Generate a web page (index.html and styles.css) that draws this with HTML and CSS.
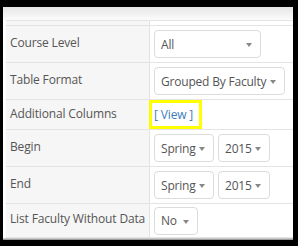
FILE: index.html
```html
<!DOCTYPE html>
<html lang="en">
<head>
  <meta charset="UTF-8">
  <title>Report Options</title>
  <link rel="stylesheet" href="styles.css">
</head>
<body>
  <div class="frame">
    <div class="top-shade"></div>
    <div class="options">
      <div class="row row-head">
        <div class="label"></div>
        <div class="value"></div>
      </div>
      <div class="row">
        <div class="label">Course Level</div>
        <div class="value">
          <span class="select w-all">All<i class="caret"></i></span>
        </div>
      </div>
      <div class="row">
        <div class="label">Table Format</div>
        <div class="value">
          <span class="select w-format">Grouped By Faculty<i class="caret"></i></span>
        </div>
      </div>
      <div class="row row-short">
        <div class="label">Additional Columns</div>
        <div class="value">
          <a href="#" class="view-link">[ View ]</a>
        </div>
      </div>
      <div class="row">
        <div class="label">Begin</div>
        <div class="value">
          <span class="select w-term">Spring<i class="caret"></i></span>
          <span class="select w-year">2015<i class="caret"></i></span>
        </div>
      </div>
      <div class="row">
        <div class="label">End</div>
        <div class="value">
          <span class="select w-term">Spring<i class="caret"></i></span>
          <span class="select w-year">2015<i class="caret"></i></span>
        </div>
      </div>
      <div class="row row-last">
        <div class="label">List Faculty Without Data</div>
        <div class="value">
          <span class="select w-no">No<i class="caret"></i></span>
        </div>
      </div>
    </div>
    <div class="bottom-shade"></div>
  </div>
</body>
</html>
```

FILE: styles.css
```css
* {
  margin: 0;
  padding: 0;
  box-sizing: border-box;
}
body {
  background: #000;
  font-family: 'Open Sans', sans-serif;
  font-size: 12px;
  letter-spacing: -0.15px;
  color: #555;
  width: 298px;
  height: 246px;
  overflow: hidden;
}
.frame {
  margin: 7px 5px 0 3px;
  height: 233px;
  background: #fff;
  padding-left: 3px;
  display: flex;
  flex-direction: column;
}
.top-shade {
  height: 13px;
  margin-left: -3px;
  background: linear-gradient(#e6e6e6, #fbfbfb);
}
.options {
  flex: 1;
}
.row {
  display: flex;
  height: 37px;
  border-top: 1px solid #e4e4e4;
}
.row-head {
  height: 5px;
}
.row-short {
  height: 30px;
}
.row-last {
  height: 35px;
  border-bottom: 1px solid #e4e4e4;
}
.label {
  width: 144px;
  flex-shrink: 0;
  background: #f6f6f6;
  border-right: 1px solid #e4e4e4;
  padding: 0 0 4px 4px;
  display: flex;
  align-items: center;
  white-space: nowrap;
}
.row-short .label {
  padding-bottom: 2px;
}
.row-head .label {
  padding: 0;
}
.value {
  flex: 1;
  display: flex;
  align-items: center;
  gap: 4px;
  padding-left: 4px;
}
.select {
  position: relative;
  display: inline-flex;
  align-items: center;
  height: 28px;
  padding: 0 6px;
  border: 1px solid #dcdcdc;
  border-radius: 4px;
  background: #fff;
  color: #555;
  font-size: 12px;
  letter-spacing: -0.2px;
  white-space: nowrap;
}
.caret {
  position: absolute;
  right: 8px;
  top: 12px;
  width: 0;
  height: 0;
  border-left: 3.5px solid transparent;
  border-right: 3.5px solid transparent;
  border-top: 4px solid #888;
}
.w-all { width: 107px; }
.w-format { width: 131px; }
.w-term { width: 60px; }
.w-year { width: 52px; }
.w-no { width: 44px; }
.view-link {
  margin-left: -5px;
  margin-top: -1px;
  width: 53px;
  height: 29px;
  border: 3px solid #ffff00;
  padding-left: 2px;
  display: flex;
  align-items: center;
  color: #3c7dbd;
  text-decoration: none;
  font-size: 12px;
}
.bottom-shade {
  height: 2px;
  margin-left: -3px;
  background: linear-gradient(#ddd, #888);
}
```
